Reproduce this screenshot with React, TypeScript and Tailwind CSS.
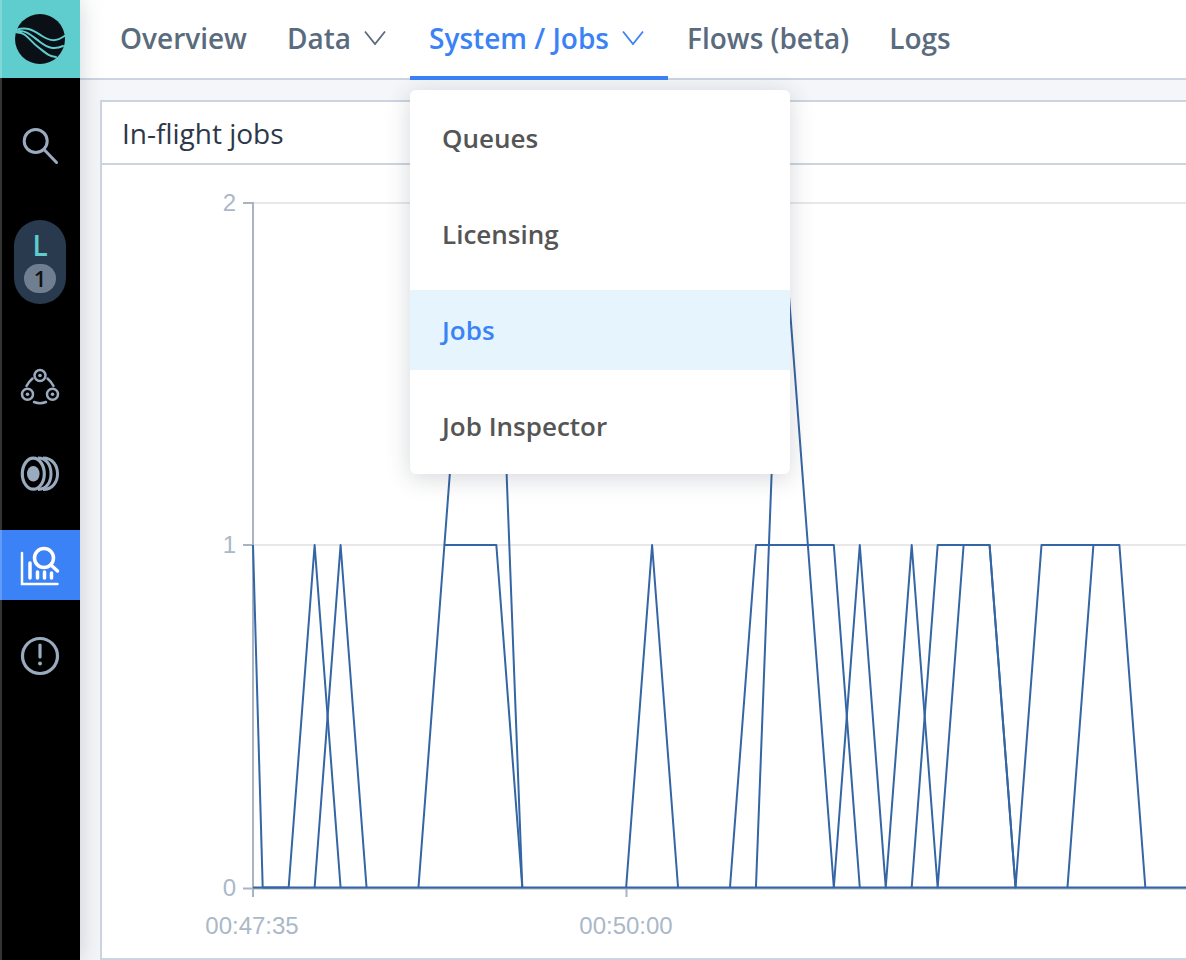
const STEP = 25.96;
const X0 = 262.7;
const Y = [887.5, 545, 203];

// points are [slot, value], slot 0 is the first bucket after the y axis
const SERIES: [number, number][][] = [
  [[0, 0], [1, 0], [2, 1], [3, 0]],
  [[2, 0], [3, 1], [4, 0]],
  [[6, 0], [7, 1], [9, 1], [10, 0]],
  [[7, 1], [8, 2], [9, 2], [10, 0]],
  [[14, 0], [15, 1], [16, 0]],
  [[18, 0], [19, 1], [22, 1], [23, 0]],
  [[19, 0], [20, 2], [21, 1], [22, 0]],
  [[22, 0], [23, 1], [24, 0], [25, 1], [26, 0], [27, 1], [28, 1], [29, 0], [30, 1], [33, 1], [34, 0]],
  [[25, 0], [26, 1], [28, 1], [29, 0]],
  [[31, 0], [32, 1], [33, 1]],
];

function toPoints(series: [number, number][]) {
  return series.map(([slot, value]) => `${X0 + slot * STEP},${Y[value]}`).join(' ');
}

function Logo() {
  return (
    <svg width="50" height="50" viewBox="15 15 50 50" fill="none">
      <circle cx="40" cy="40" r="25" fill="#0b1016" />
      <g stroke="#5fcdcd" strokeWidth="2" strokeLinecap="round">
        <path d="M16 31C28 27 34 32 42 37S56 43 64.500 37" />
        <path d="M16 32.500C26 30 32 37 40 43S54 51 63 47" />
        <path d="M17 33.500C26 33 30 42 38 48S48 57 56 58" />
      </g>
    </svg>
  );
}

function SearchIcon() {
  return (
    <svg width="40" height="40" viewBox="20 125 40 40" fill="none" stroke="#9aabc0" strokeWidth="3" strokeLinecap="round">
      <circle cx="35.700" cy="141" r="11.500" />
      <path d="M44.500 150L56.500 162.500" />
    </svg>
  );
}

function ClusterIcon() {
  return (
    <svg width="44" height="44" viewBox="18 364 44 44" fill="none" stroke="#9aabc0" strokeWidth="2.500" strokeLinecap="round">
      <circle cx="40" cy="375.500" r="5.500" />
      <circle cx="27.500" cy="394.300" r="5.500" />
      <circle cx="52.500" cy="394.300" r="5.500" />
      <circle cx="40" cy="375.500" r="1.800" fill="#9aabc0" stroke="none" />
      <circle cx="27.500" cy="394.300" r="1.800" fill="#9aabc0" stroke="none" />
      <circle cx="52.500" cy="394.300" r="1.800" fill="#9aabc0" stroke="none" />
      <path d="M32.500 378.500Q28.500 382 26.500 386" />
      <path d="M47.500 378.500Q51.500 382 53.500 386" />
      <path d="M34 402Q40 404.500 46 402" />
    </svg>
  );
}

function DisksIcon() {
  return (
    <svg width="44" height="44" viewBox="18 451 44 44" fill="none" stroke="#9aabc0" strokeWidth="3.200">
      <ellipse cx="33.300" cy="473.700" rx="11" ry="15.500" />
      <ellipse cx="33.300" cy="473.700" rx="6.300" ry="7.800" fill="#9aabc0" stroke="none" />
      <path d="M38 458C47 458 51 466 51 473.700S47 489.500 38 489.500" strokeWidth="3" />
      <path d="M43 458C53 458 57.500 466 57.500 473.700S53 489.500 43 489.500" strokeWidth="3" />
    </svg>
  );
}

function JobsIcon() {
  return (
    <svg width="44" height="44" viewBox="18 543 44 44" fill="none" stroke="#fff" strokeLinecap="round">
      <path d="M22 553V584H57.500" strokeWidth="2.500" />
      <path d="M30 563V578M37.500 572V578M44.500 572V578M51.500 573V578" strokeWidth="3.500" />
      <circle cx="44" cy="558" r="9.500" strokeWidth="3.500" />
      <path d="M51 565L57.500 571" strokeWidth="3.500" />
    </svg>
  );
}

function AlertIcon() {
  return (
    <svg width="44" height="44" viewBox="18 634 44 44" fill="none" stroke="#9aabc0" strokeWidth="3.200" strokeLinecap="round">
      <circle cx="40" cy="656" r="17.500" />
      <path d="M40 645V657" />
      <circle cx="40" cy="663.500" r="2" fill="#9aabc0" stroke="none" />
    </svg>
  );
}

function Chevron() {
  return (
    <svg width="22" height="16" viewBox="0 0 22 16" fill="none" stroke="currentColor" strokeWidth="1.800" className="mr-1 ml-[-1px]">
      <path d="M1 1.500L11 14L21 1.500" />
    </svg>
  );
}

function Sidebar() {
  return (
    <aside className="relative z-10 flex h-full w-20 shrink-0 flex-col items-center bg-black shadow-[0_0_22px_rgba(45,55,72,0.22)]">
      <div className="flex h-[78px] w-full shrink-0 items-center justify-center bg-[#5fcdcd]">
        <Logo />
      </div>
      <div className="mt-[47px] flex h-10 items-center justify-center">
        <SearchIcon />
      </div>
      <div className="mt-[55px] flex h-[84px] w-[52px] flex-col items-center rounded-[26px] bg-[#2a3a4e] pt-[9px]">
        <span className="text-[28px] leading-[32px] font-semibold text-[#5fcdcd]">L</span>
        <span className="mt-[3px] flex h-[29px] w-8 items-center justify-center rounded-full bg-[#6f7e90] text-[22px] font-semibold text-[#111]">1</span>
      </div>
      <div className="mt-[60px] flex h-11 items-center justify-center">
        <ClusterIcon />
      </div>
      <div className="mt-[43px] flex h-11 items-center justify-center">
        <DisksIcon />
      </div>
      <div className="mt-[35px] flex h-[70px] w-full items-center justify-center bg-[#3b82f6]">
        <JobsIcon />
      </div>
      <div className="mt-[34px] flex h-11 items-center justify-center">
        <AlertIcon />
      </div>
      <div className="absolute inset-y-0 left-0 w-[2px] bg-white/20" />
    </aside>
  );
}

function NavItem({ label, hasMenu, active }: { label: string; hasMenu?: boolean; active?: boolean }) {
  return (
    <div
      className={`relative flex h-20 items-center gap-[14px] border-b-4 px-5 text-[28px] font-semibold ${
        active ? 'mr-[-1px] border-[#3b82f6] pl-[19px] text-[#3b82f6]' : 'border-transparent text-[#5a6b7e]'
      }`}
    >
      {label}
      {hasMenu && <Chevron />}
      {active && <JobsMenu />}
    </div>
  );
}

function JobsMenu() {
  return (
    <div className="absolute top-[90px] left-0 z-20 w-[380px] rounded-md bg-white py-2 text-[26px] font-semibold text-[#555] shadow-[0_4px_24px_rgba(45,55,72,0.2)]">
      <div className="mb-4 flex h-20 items-center px-8">Queues</div>
      <div className="mb-4 flex h-20 items-center px-8">Licensing</div>
      <div className="mb-4 flex h-20 items-center bg-[#e6f4fd] px-8 text-[#3b82f6]">Jobs</div>
      <div className="flex h-20 items-center px-8">Job Inspector</div>
    </div>
  );
}

function Chart() {
  return (
    <svg width="1084" height="793" viewBox="102 165 1084 793" fill="none" className="block">
      <g stroke="#e8e8e8" strokeWidth="2">
        <path d="M253 203H1186" />
        <path d="M253 545H1186" />
      </g>
      <g stroke="#a9b4c2" strokeWidth="2">
        <path d="M253 202V897" />
        <path d="M243 203H253M243 545H253M243 888.500H1186" />
        <path d="M626.500 888V897" />
      </g>
      <g fill="#aab8c8" fontFamily="'Liberation Sans', Arial, sans-serif" fontSize="24">
        <text x="236" y="211" textAnchor="end">2</text>
        <text x="236" y="553" textAnchor="end">1</text>
        <text x="236" y="896" textAnchor="end">0</text>
        <text x="252" y="934" textAnchor="middle">00:47:35</text>
        <text x="626" y="934" textAnchor="middle">00:50:00</text>
      </g>
      <g stroke="#3465a4" strokeWidth="2" strokeLinejoin="round">
        <polyline points={`253,545 ${X0},887.5`} />
        <path d="M253 887.500H1186" />
        {SERIES.map((series, index) => (
          <polyline key={index} points={toPoints(series)} />
        ))}
      </g>
    </svg>
  );
}

export default function App() {
  return (
    <div className="relative flex h-[960px] w-[1186px] overflow-hidden bg-[#f4f6f9] font-['Open_Sans',sans-serif]">
      <Sidebar />
      <div className="flex min-w-0 flex-1 flex-col">
        <nav className="relative z-[5] flex h-20 shrink-0 items-start border-b-2 border-[#cbd5e0] bg-white pl-5">
          <NavItem label="Overview" />
          <NavItem label="Data" hasMenu />
          <NavItem label="System / Jobs" hasMenu active />
          <NavItem label="Flows (beta)" />
          <NavItem label="Logs" />
        </nav>
        <main className="pt-5 pl-5">
          <section className="w-[1100px] border-2 border-[#cbd5e0] bg-white">
            <h2 className="flex h-[63px] items-center border-b-2 border-[#cbd5e0] pl-5 text-[28px] font-normal text-[#2d3748]">In-flight jobs</h2>
            <Chart />
          </section>
        </main>
      </div>
    </div>
  );
}
